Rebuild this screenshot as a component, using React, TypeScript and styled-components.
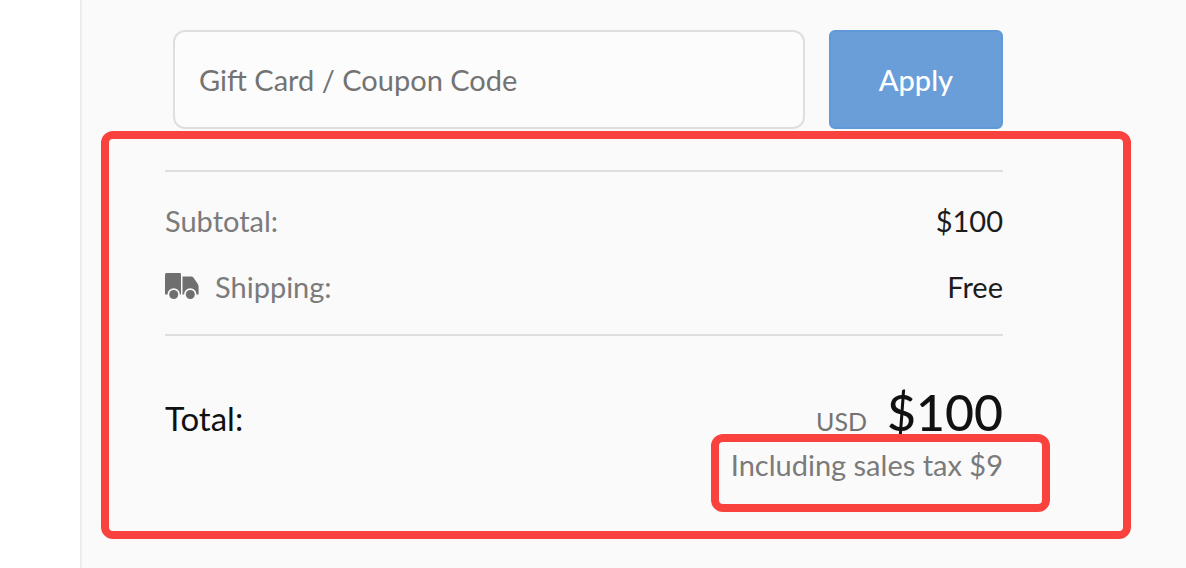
import React from "react";
import styled, { createGlobalStyle } from "styled-components";

const GlobalStyle = createGlobalStyle`
  *, *::before, *::after { box-sizing: border-box; }
  body {
    margin: 0;
    background: #ffffff;
    font-family: Lato, "Liberation Sans", sans-serif;
    font-size: 29px;
    color: #1c1c1c;
  }
`;

const Panel = styled.main`
  min-height: 100vh;
  margin-left: 80px;
  padding: 30px 55px 28px 19px;
  background: #fafafa;
  border-left: 2px solid #ececee;
`;

const CouponForm = styled.form`
  display: flex;
  gap: 24px;
  margin: 0 128px 2px 72px;
`;

const CouponInput = styled.input`
  flex: 1;
  min-width: 0;
  height: 99px;
  padding: 0 24px;
  border: 2px solid #dfdfdf;
  border-radius: 12px;
  background: #fcfcfc;
  font: inherit;
  color: #1c1c1c;

  &::placeholder {
    color: #737373;
    opacity: 1;
  }
`;

const ApplyButton = styled.button`
  width: 174px;
  height: 99px;
  padding: 0;
  border: 2px solid #5f99d9;
  border-radius: 6px;
  background: #6a9ed9;
  color: #ffffff;
  font: inherit;
  font-weight: 500;
`;

const Summary = styled.section`
  padding: 31px 120px 48px 56px;
  border: 8px solid #f9423d;
  border-radius: 12px;
`;

const Lines = styled.dl`
  margin: 0;
  padding: 15px 0;
  border-top: 2px solid #dedede;
  border-bottom: 2px solid #dedede;
`;

const Line = styled.div`
  display: flex;
  align-items: center;
  justify-content: space-between;
  height: 66px;
`;

const Label = styled.dt`
  display: flex;
  align-items: center;
  gap: 16px;
  color: #7b7b7b;
`;

const Value = styled.dd`
  margin: 0;
`;

const TotalLine = styled.div`
  display: flex;
  align-items: baseline;
  justify-content: space-between;
  margin-top: 51px;
  line-height: 50px;
  color: #111111;
`;

const TotalLabel = styled.span`
  font-size: 33px;
`;

const Currency = styled.span`
  margin-right: 20px;
  font-size: 25px;
  color: #737373;
`;

const Amount = styled.strong`
  font-size: 50px;
  font-weight: 500;
`;

const TaxNote = styled.p`
  position: relative;
  width: fit-content;
  margin: 1px 0 0 auto;
  line-height: 36px;
  color: #7b7b7b;

  &::after {
    content: "";
    position: absolute;
    inset: -13px -47px -29px -20px;
    border: 8px solid #f9423d;
    border-radius: 12px;
  }
`;

const Truck = styled.svg`
  display: block;
  width: 34px;
  height: 28px;
`;

const TruckIcon = () => (
  <Truck viewBox="0 0 34 28" aria-hidden="true">
    <path
      fill="#6f6f6f"
      d="M1.500 1H15q1 0 1 1v20.500h-1.100a6.200 6.200 0 0 0-12.400 0H0V2.500Q0 1 1.500 1Z"
    />
    <path
      fill="#6f6f6f"
      d="M17.500 4.500h9q1 0 1.700.8L32.500 11.500q1.100 1.500 1.100 3.300v7.700H31.500a6.200 6.200 0 0 0-12.400 0H17.500Z"
    />
    <circle cx="8.700" cy="22.500" r="4.500" fill="#6f6f6f" />
    <circle cx="25.300" cy="22.500" r="4.500" fill="#6f6f6f" />
  </Truck>
);

export default function App() {
  return (
    <>
      <GlobalStyle />
      <Panel>
        <CouponForm onSubmit={(event) => event.preventDefault()}>
          <CouponInput
            type="text"
            name="coupon"
            aria-label="Gift Card / Coupon Code"
            placeholder="Gift Card / Coupon Code"
          />
          <ApplyButton type="submit">Apply</ApplyButton>
        </CouponForm>
        <Summary>
          <Lines>
            <Line>
              <Label>Subtotal:</Label>
              <Value>$100</Value>
            </Line>
            <Line>
              <Label>
                <TruckIcon />
                Shipping:
              </Label>
              <Value>Free</Value>
            </Line>
          </Lines>
          <TotalLine>
            <TotalLabel>Total:</TotalLabel>
            <span>
              <Currency>USD</Currency>
              <Amount>$100</Amount>
            </span>
          </TotalLine>
          <TaxNote>Including sales tax $9</TaxNote>
        </Summary>
      </Panel>
    </>
  );
}
